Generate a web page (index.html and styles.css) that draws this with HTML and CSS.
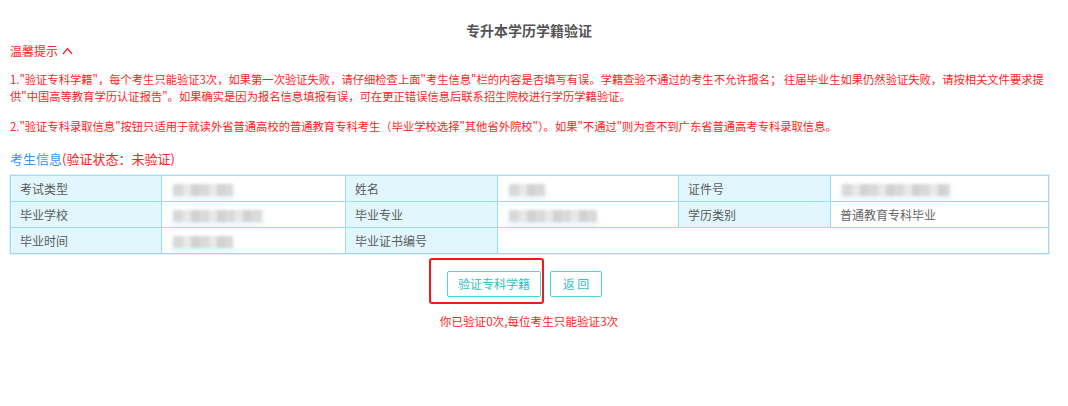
FILE: index.html
```html
<!DOCTYPE html>
<html lang="zh-CN">
<head>
<meta charset="utf-8">
<link rel="stylesheet" href="styles.css">
</head>
<body>
<div class="page">
  <h1 class="title">专升本学历学籍验证</h1>
  <div class="tip-head">温馨提示
    <svg class="chev" width="11" height="8" viewBox="0 0 11 8"><polyline points="1,7 5.5,1.5 10,7" fill="none" stroke="#f22" stroke-width="1.3"/></svg>
  </div>
  <p class="tip tip1">1."验证专科学籍"，每个考生只能验证3次，如果第一次验证失败，请仔细检查上面"考生信息"栏的内容是否填写有误。学籍查验不通过的考生不允许报名； 往届毕业生如果仍然验证失败，请按相关文件要求提供"中国高等教育学历认证报告"。如果确实是因为报名信息填报有误，可在更正错误信息后联系招生院校进行学历学籍验证。</p>
  <p class="tip tip2">2."验证专科录取信息"按钮只适用于就读外省普通高校的普通教育专科考生（毕业学校选择"其他省外院校"）。如果"不通过"则为查不到广东省普通高考专科录取信息。</p>
  <div class="info-head"><span class="info-blue">考生信息</span><span class="info-red">(验证状态：未验证)</span></div>
  <table class="info">
    <colgroup>
      <col class="c1"><col class="c2"><col class="c3"><col class="c4"><col class="c5"><col class="c6">
    </colgroup>
    <tr>
      <td class="lbl">考试类型</td>
      <td class="val"><span class="blur w60"></span></td>
      <td class="lbl">姓名</td>
      <td class="val"><span class="blur w36"></span></td>
      <td class="lbl">证件号</td>
      <td class="val"><span class="blur w108"></span></td>
    </tr>
    <tr>
      <td class="lbl">毕业学校</td>
      <td class="val"><span class="blur w90"></span></td>
      <td class="lbl">毕业专业</td>
      <td class="val"><span class="blur w88"></span></td>
      <td class="lbl">学历类别</td>
      <td class="val">普通教育专科毕业</td>
    </tr>
    <tr>
      <td class="lbl">毕业时间</td>
      <td class="val"><span class="blur w60"></span></td>
      <td class="lbl">毕业证书编号</td>
      <td class="val" colspan="3"></td>
    </tr>
  </table>
  <div class="actions">
    <div class="btn-wrap">
      <button class="btn btn-main">验证专科学籍</button>
      <span class="mark"></span>
    </div>
    <button class="btn btn-back">返 回</button>
  </div>
  <div class="msg">你已验证0次,每位考生只能验证3次</div>
</div>
</body>
</html>
```

FILE: styles.css
```css
* { box-sizing: border-box; }
html, body { margin: 0; padding: 0; background: #fff; }
body {
  font-family: "Noto Sans CJK SC", "Microsoft YaHei", sans-serif;
  font-size: 12px;
  color: #555;
}
.page {
  width: 1068px;
  padding: 0 20px 0 10px;
}
.title {
  margin: 0;
  padding-top: 20px;
  height: 41px;
  line-height: 20px;
  font-size: 14px;
  font-weight: bold;
  color: #555;
  text-align: center;
}
.tip-head {
  display: flex;
  align-items: center;
  gap: 4px;
  height: 20px;
  line-height: 20px;
  font-size: 12px;
  color: #f22;
}
.chev { display: block; margin-top: -1px; }
.tip {
  margin: 0;
  font-size: 11.3px;
  line-height: 17px;
  color: #f22;
  width: 1048px;
}
.tip1 { margin-top: 10px; }
.tip2 { margin-top: 13px; }
.info-head {
  margin-top: 14px;
  height: 20px;
  line-height: 20px;
  font-size: 13px;
}
.info-blue { color: #3d8ff5; }
.info-red { color: #f22; }
.info {
  margin-top: 6px;
  width: 1038px;
  border-collapse: collapse;
  table-layout: fixed;
  box-shadow: 0 0 0 1px #e8eef0;
}
.c1 { width: 151px; }
.c2 { width: 184px; }
.c3 { width: 152px; }
.c4 { width: 181px; }
.c5 { width: 152px; }
.c6 { width: 218px; }
.info td {
  border: 1.5px solid #9ddcf6;
  height: 26px;
  padding: 0 9px;
  font-size: 12px;
  line-height: 16px;
  white-space: nowrap;
  overflow: hidden;
}
.info td.lbl { background: #e1f7fd; color: #5a5a5a; }
.info td.val { background: #fff; color: #666; }
.blur {
  display: inline-block;
  vertical-align: middle;
  height: 12px;
  margin-left: 2px;
  background: repeating-linear-gradient(90deg, #d9d9d9 0 10px, #e8e8e8 10px 18px, #d2d2d2 18px 26px);
  filter: blur(1.8px);
  box-shadow: 0 5px 6px 1px #eef6fb;
}
.w36 { width: 36px; }
.w60 { width: 60px; }
.w88 { width: 88px; }
.w90 { width: 90px; }
.w108 { width: 108px; }
.actions {
  margin-top: 17px;
  display: flex;
  justify-content: center;
  gap: 9px;
  padding-right: 9px;
}
.btn-wrap { position: relative; }
.btn {
  display: block;
  height: 26px;
  padding: 0;
  border: 1px solid #4fd3d6;
  background: #fff;
  color: #33bfc4;
  font-family: "Noto Sans CJK SC", sans-serif;
  font-size: 12px;
  line-height: 24px;
  border-radius: 2px;
}
.btn-main { width: 94px; }
.btn-back { width: 52px; }
.mark {
  position: absolute;
  left: -18px;
  top: -13px;
  width: 115px;
  height: 46px;
  border: 2.5px solid #f21a1a;
  border-radius: 3px;
}
.msg {
  margin-top: 16px;
  text-align: center;
  color: #f22;
  font-size: 11.6px;
  line-height: 16px;
}
```
